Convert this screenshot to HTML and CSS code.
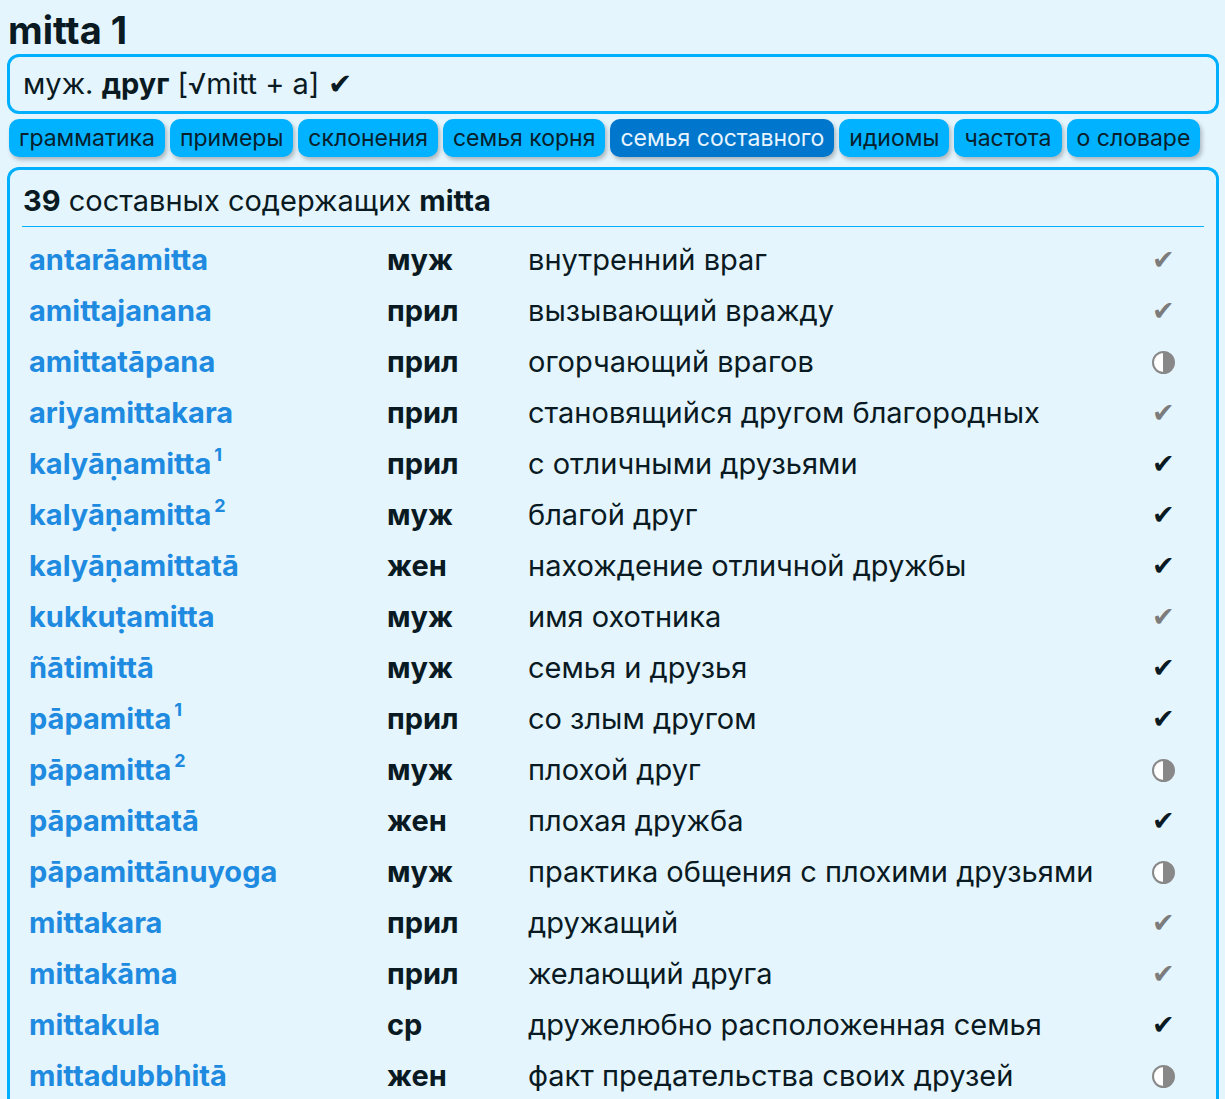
FILE: index.html
```html
<!DOCTYPE html>
<html lang="ru">
<head>
<meta charset="utf-8">
<link rel="stylesheet" href="styles.css">
</head>
<body>
<h1 class="title">mitta 1</h1>
<div class="summary">муж. <b>друг</b> [√mitt + a] ✔</div>
<nav class="tabs">
  <span class="tab">грамматика</span>
  <span class="tab">примеры</span>
  <span class="tab">склонения</span>
  <span class="tab">семья корня</span>
  <span class="tab active">семья составного</span>
  <span class="tab">идиомы</span>
  <span class="tab">частота</span>
  <span class="tab">о словаре</span>
</nav>
<section class="panel">
  <div class="panel-head"><b>39</b> составных содержащих <b>mitta</b></div>
  <table class="fam">
    <tr><td class="w">antarāamitta</td><td class="pos">муж</td><td class="m">внутренний враг</td><td class="c gray">✔</td></tr>
    <tr><td class="w">amittajanana</td><td class="pos">прил</td><td class="m">вызывающий вражду</td><td class="c gray">✔</td></tr>
    <tr><td class="w">amittatāpana</td><td class="pos">прил</td><td class="m">огорчающий врагов</td><td class="c"><span class="half"></span></td></tr>
    <tr><td class="w">ariyamittakara</td><td class="pos">прил</td><td class="m">становящийся другом благородных</td><td class="c gray">✔</td></tr>
    <tr><td class="w">kalyāṇamitta<sup>1</sup></td><td class="pos">прил</td><td class="m">с отличными друзьями</td><td class="c">✔</td></tr>
    <tr><td class="w">kalyāṇamitta<sup>2</sup></td><td class="pos">муж</td><td class="m">благой друг</td><td class="c">✔</td></tr>
    <tr><td class="w">kalyāṇamittatā</td><td class="pos">жен</td><td class="m">нахождение отличной дружбы</td><td class="c">✔</td></tr>
    <tr><td class="w">kukkuṭamitta</td><td class="pos">муж</td><td class="m">имя охотника</td><td class="c gray">✔</td></tr>
    <tr><td class="w">ñātimittā</td><td class="pos">муж</td><td class="m">семья и друзья</td><td class="c">✔</td></tr>
    <tr><td class="w">pāpamitta<sup>1</sup></td><td class="pos">прил</td><td class="m">со злым другом</td><td class="c">✔</td></tr>
    <tr><td class="w">pāpamitta<sup>2</sup></td><td class="pos">муж</td><td class="m">плохой друг</td><td class="c"><span class="half"></span></td></tr>
    <tr><td class="w">pāpamittatā</td><td class="pos">жен</td><td class="m">плохая дружба</td><td class="c">✔</td></tr>
    <tr><td class="w">pāpamittānuyoga</td><td class="pos">муж</td><td class="m">практика общения с плохими друзьями</td><td class="c"><span class="half"></span></td></tr>
    <tr><td class="w">mittakara</td><td class="pos">прил</td><td class="m">дружащий</td><td class="c gray">✔</td></tr>
    <tr><td class="w">mittakāma</td><td class="pos">прил</td><td class="m">желающий друга</td><td class="c gray">✔</td></tr>
    <tr><td class="w">mittakula</td><td class="pos">ср</td><td class="m">дружелюбно расположенная семья</td><td class="c">✔</td></tr>
    <tr><td class="w">mittadubbhitā</td><td class="pos">жен</td><td class="m">факт предательства своих друзей</td><td class="c"><span class="half"></span></td></tr>
  </table>
</section>
</body>
</html>
```
FILE: styles.css
```css
html, body {
  background: #e5f5fe;
}
body {
  margin: 0;
  padding: 6px 6px 0 7px;
  font-family: Inter, "Noto Sans", sans-serif;
  color: #0a1a22;
}
.title {
  margin: 0;
  padding-left: 1px;
  font-size: 38px;
  line-height: 48px;
  font-weight: 700;
}
.summary {
  border: 3px solid #00b0ff;
  border-radius: 12px;
  box-sizing: border-box;
  height: 60px;
  padding: 0 13px;
  font-size: 29px;
  line-height: 54px;
}
.tabs {
  display: flex;
  gap: 5px;
  margin: 5px 0 10px 2px;
}
.tab {
  background: #00b2ff;
  border-radius: 10px;
  height: 38px;
  padding: 0 10px;
  display: flex;
  align-items: center;
  font-size: 23px;
  color: #07202c;
  box-shadow: 2px 3px 4px rgba(0, 0, 0, 0.25);
}
.tab.active {
  background: #0077cc;
  color: #e8f4ff;
}
.panel {
  border: 3px solid #00b0ff;
  border-bottom: none;
  border-radius: 12px 12px 0 0;
  padding: 12px 12px 0 12px;
}
.panel-head {
  font-size: 29px;
  padding: 0 1px 6px;
  line-height: 38px;
  border-bottom: 1px solid #00b0ff;
}
.fam {
  border-collapse: collapse;
  width: 100%;
  margin-top: 7px;
  font-size: 29px;
}
.fam td {
  padding: 0 7px;
  height: 51px;
  line-height: 34px;
  white-space: nowrap;
}
.w {
  color: #1e8ae0;
  font-weight: 700;
  width: 344px;
}
.w sup {
  font-size: 18px;
  font-weight: 700;
  line-height: 0;
  vertical-align: 13px;
  margin-left: 3px;
}
.pos {
  font-weight: 700;
  width: 127px;
}
.c {
  text-align: center;
  width: 60px;
  padding-right: 11px !important;
  font-size: 27px;
}
.c.gray {
  color: #7c7c7c;
}
.half {
  display: inline-block;
  width: 23px;
  height: 23px;
  box-sizing: border-box;
  border: 2px solid #888;
  border-radius: 50%;
  background: linear-gradient(90deg, #fff 50%, #888 50%);
  vertical-align: -3px;
}
```
